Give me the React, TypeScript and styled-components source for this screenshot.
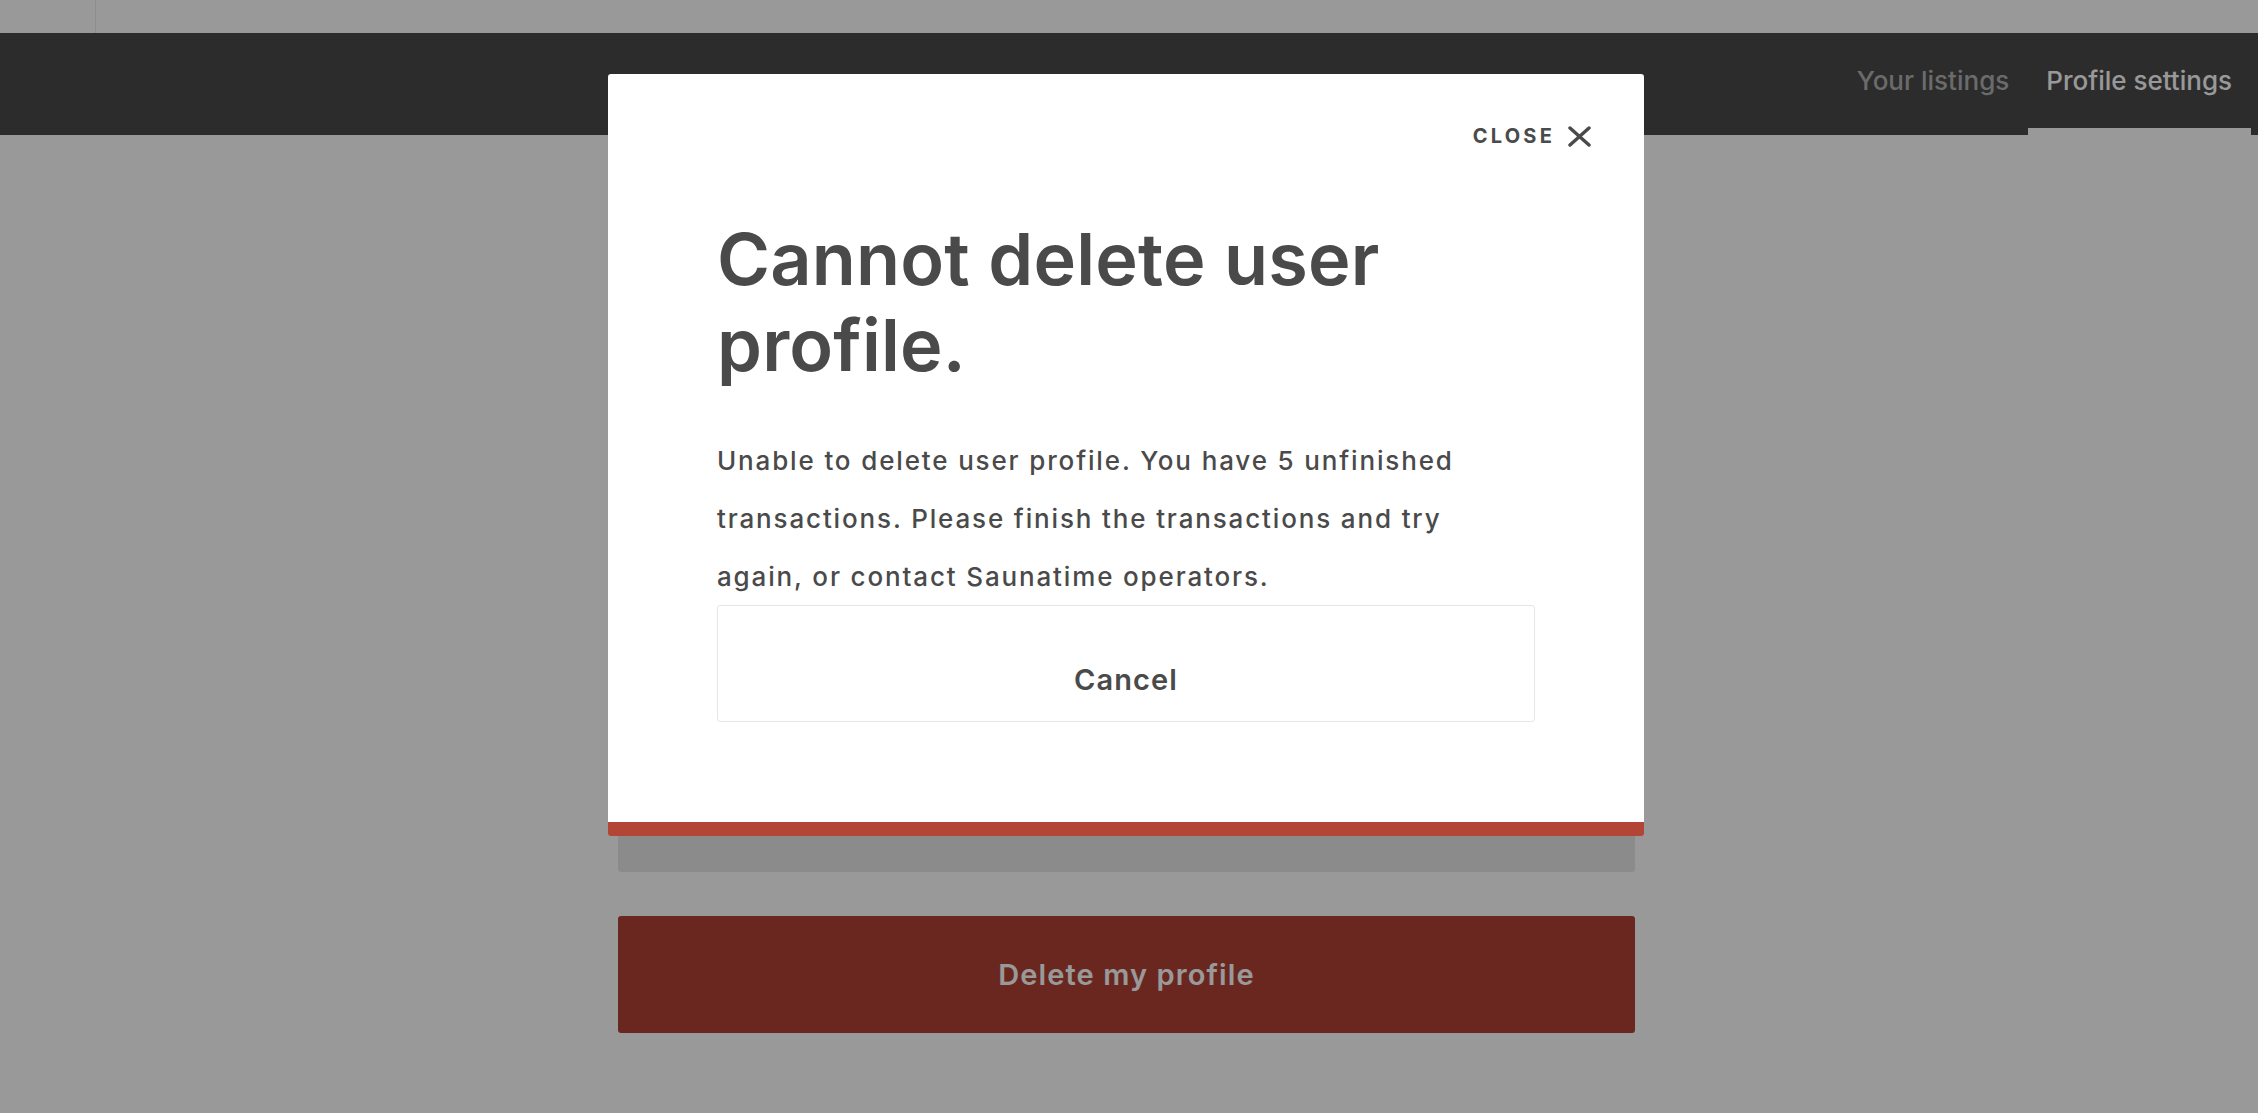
import React from "react";
import styled, { createGlobalStyle } from "styled-components";

const GlobalStyle = createGlobalStyle`
  html, body {
    margin: 0;
    padding: 0;
    background: #ffffff;
  }
  body {
    font-family: Inter, "Open Sans", "Liberation Sans", sans-serif;
    overflow: hidden;
  }
  *, *::before, *::after {
    box-sizing: border-box;
  }
`;

const Page = styled.div`
  min-height: 1113px;
  display: flex;
  flex-direction: column;
  background: #ffffff;
`;

const Strip = styled.div`
  height: 33px;
  display: flex;
`;

const StripCell = styled.div`
  width: 96px;
  border-right: 1px solid #ebebeb;
`;

const Topbar = styled.header`
  height: 102px;
  background: #4a4a4a;
  display: flex;
  justify-content: flex-end;
  padding-right: 7px;
`;

const NavTab = styled.a<{ $active?: boolean }>`
  display: flex;
  align-items: center;
  height: 100%;
  padding: 0 19px 0 18px;
  font-size: 26px;
  font-weight: 500;
  line-height: normal;
  text-decoration: none;
  color: ${(p) => (p.$active ? "#ffffff" : "#b3b3b3")};
  border-bottom: 7px solid ${(p) => (p.$active ? "#ffffff" : "transparent")};
`;

const Content = styled.main`
  width: 1017px;
  align-self: center;
  margin-right: 5px;
  padding-top: 625px;
  display: flex;
  flex-direction: column;
  gap: 44px;
`;

const InfoBox = styled.div`
  height: 112px;
  background: #e8e8e8;
  border-radius: 3px;
`;

const DangerButton = styled.button`
  height: 117px;
  border: 0;
  border-radius: 3px;
  background: rgb(176, 66, 54);
  color: #ffffff;
  font-family: inherit;
  font-size: 29px;
  font-weight: 600;
  letter-spacing: 1.1px;
  display: flex;
  align-items: center;
  justify-content: center;
`;

const Overlay = styled.div`
  position: fixed;
  inset: 0;
  background: rgba(0, 0, 0, 0.4);
  display: flex;
  justify-content: center;
  align-items: flex-start;
  padding-top: 74px;
`;

const Modal = styled.div`
  width: 1036px;
  margin-right: 6px;
  background: #ffffff;
  border-radius: 3px;
  border-bottom: 14px solid #b24536;
  padding: 52px 109px 100px 109px;
  display: flex;
  flex-direction: column;
  color: #4a4a4a;
`;

const CloseButton = styled.button`
  align-self: flex-end;
  margin-right: -56px;
  height: 21px;
  display: flex;
  align-items: center;
  gap: 13px;
  padding: 0;
  border: 0;
  background: none;
  color: #4a4a4a;
  font-family: inherit;
  font-size: 20px;
  line-height: 21px;
  font-weight: 700;
  letter-spacing: 3.2px;
  text-transform: uppercase;
  cursor: pointer;
`;

const Title = styled.h1`
  margin: 69px 0 0 0;
  font-size: 72px;
  line-height: 86px;
  font-weight: 600;
  letter-spacing: 0.2px;
`;

const Message = styled.p`
  margin: 44px 0 0 0;
  max-width: 780px;
  font-size: 26px;
  line-height: 58px;
  font-weight: 500;
  letter-spacing: 1.85px;
`;

const CancelButton = styled.button`
  height: 117px;
  margin-top: -1px;
  border: 1px solid #e6e6e6;
  border-radius: 3px;
  background: #ffffff;
  color: #4a4a4a;
  padding: 32px 0 0 0;
  font-family: inherit;
  font-size: 29px;
  line-height: 29px;
  font-weight: 600;
  letter-spacing: 1.1px;
  text-align: center;
  display: block;
  width: 100%;
`;

const CloseIcon = () => (
  <svg width="23" height="21" viewBox="0 0 23 21" aria-hidden="true">
    <path
      d="M2 2 L21 19 M21 2 L2 19"
      stroke="#4a4a4a"
      strokeWidth="3.4"
      strokeLinecap="round"
      fill="none"
    />
  </svg>
);

export default function App() {
  return (
    <>
      <GlobalStyle />
      <Page>
        <Strip>
          <StripCell />
        </Strip>
        <Topbar>
          <NavTab href="#">Your listings</NavTab>
          <NavTab href="#" $active>
            Profile settings
          </NavTab>
        </Topbar>
        <Content>
          <InfoBox />
          <DangerButton>Delete my profile</DangerButton>
        </Content>
      </Page>
      <Overlay>
        <Modal>
          <CloseButton>
            <span>Close</span>
            <CloseIcon />
          </CloseButton>
          <Title>Cannot delete user profile.</Title>
          <Message>
            Unable to delete user profile. You have 5 unfinished transactions.
            Please finish the transactions and try again, or contact Saunatime
            operators.
          </Message>
          <CancelButton>Cancel</CancelButton>
        </Modal>
      </Overlay>
    </>
  );
}
